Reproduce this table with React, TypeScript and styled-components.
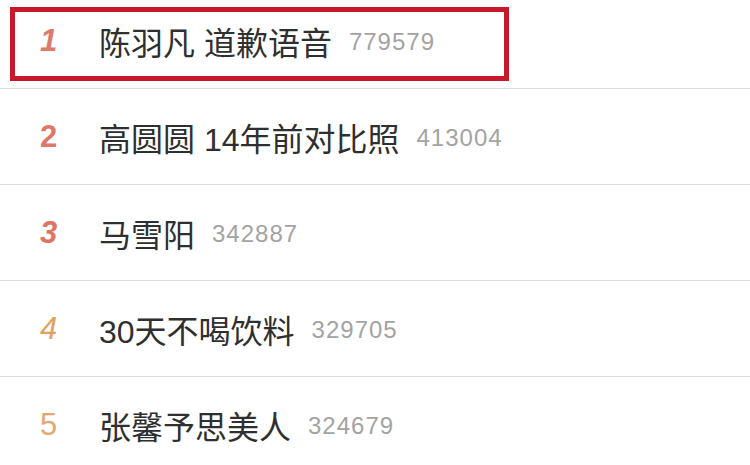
import React from "react";
import styled, { createGlobalStyle } from "styled-components";

const Global = createGlobalStyle`
  html, body {
    margin: 0;
    padding: 0;
    background: #ffffff;
  }
  body {
    font-family: "Liberation Sans", "Noto Sans CJK SC", sans-serif;
  }
`;

const List = styled.div`
  width: 750px;
  height: 465px;
  overflow: hidden;
  background: #fff;
`;

const Row = styled.div<{ $first?: boolean }>`
  position: relative;
  display: flex;
  align-items: center;
  height: ${(p) => (p.$first ? "89px" : "96px")};
  padding-bottom: ${(p) => (p.$first ? "6px" : "0")};
  box-sizing: border-box;
  border-bottom: 1px solid #dedede;
`;

// red annotation frame drawn over the first row
const Highlight = styled.div`
  position: absolute;
  left: 10px;
  top: 7px;
  width: 499px;
  height: 74px;
  box-sizing: border-box;
  border: 5px solid #c8182c;
  pointer-events: none;
`;

const Rank = styled.div<{ $color: string; $italic: boolean; $bold: boolean }>`
  width: 97px;
  flex-shrink: 0;
  text-align: center;
  font-family: "Liberation Sans", Arial, sans-serif;
  font-size: 31px;
  font-weight: ${(p) => (p.$bold ? 700 : 400)};
  font-style: ${(p) => (p.$italic ? "italic" : "normal")};
  color: ${(p) => p.$color};
  padding-right: 2px;
`;

const Title = styled.span`
  font-family: "Liberation Sans", "Noto Sans CJK SC", sans-serif;
  font-size: 32px;
  color: #2f2f2f;
  white-space: pre;
`;

const Count = styled.span`
  margin-left: 17px;
  font-family: "Liberation Sans", Arial, sans-serif;
  font-size: 24px;
  letter-spacing: 1px;
  color: #a3a3a3;
  padding-top: 2px;
`;

const items = [
  { rank: 1, title: "陈羽凡 道歉语音", count: "779579", color: "#dc7a6c", italic: true, bold: true },
  { rank: 2, title: "高圆圆 14年前对比照", count: "413004", color: "#e07668", italic: false, bold: true },
  { rank: 3, title: "马雪阳", count: "342887", color: "#de7464", italic: true, bold: true },
  { rank: 4, title: "30天不喝饮料", count: "329705", color: "#e3a160", italic: true, bold: false },
  { rank: 5, title: "张馨予思美人", count: "324679", color: "#e6a66c", italic: false, bold: false },
];

export default function App() {
  return (
    <>
      <Global />
      <List>
        {items.map((it, i) => (
          <Row key={it.rank} $first={i === 0}>
            {i === 0 && <Highlight />}
            <Rank $color={it.color} $italic={it.italic} $bold={it.bold}>
              {it.rank}
            </Rank>
            <Title>{it.title}</Title>
            <Count>{it.count}</Count>
          </Row>
        ))}
      </List>
    </>
  );
}
